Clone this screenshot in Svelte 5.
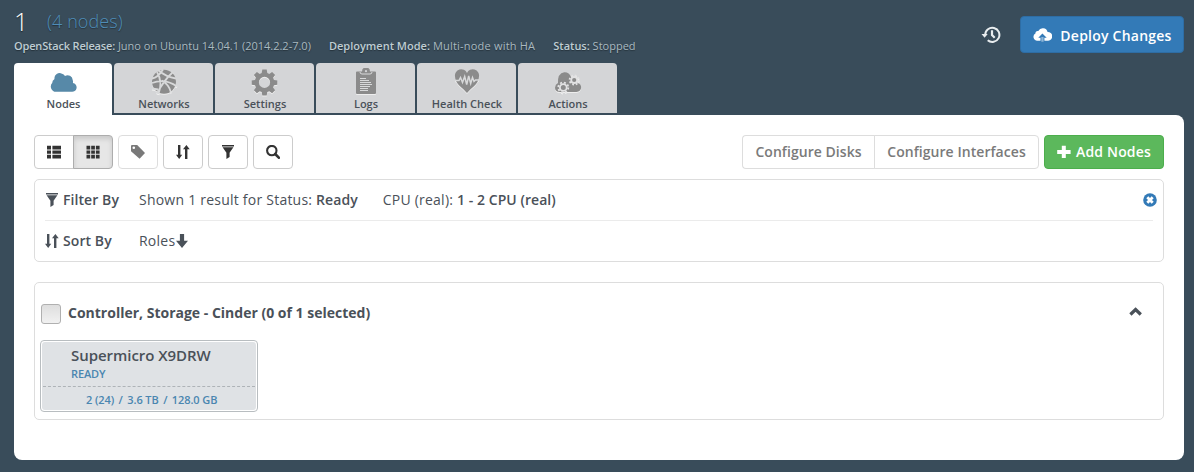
<script>
  const meta = [
    ['OpenStack Release:', 'Juno on Ubuntu 14.04.1 (2014.2.2-7.0)'],
    ['Deployment Mode:', 'Multi-node with HA'],
    ['Status:', 'Stopped']
  ];
  const tabs = ['Nodes', 'Networks', 'Settings', 'Logs', 'Health Check', 'Actions'];
  const specs = ['2 (24)', '/', '3.6 TB', '/', '128.0 GB'];
</script>

{#snippet sortIcon()}
  <svg width="14" height="14" viewBox="0 0 14 14" fill="currentColor"><path d="M2 0h2.400v9.800H6.200L3.200 14 0 9.800h2zM9 14h2.400V4.200h2.300L10.400 0 7 4.200h2z" /></svg>
{/snippet}

{#snippet filterIcon()}
  <svg width="14" height="14" viewBox="0 0 14 14" fill="currentColor"><path d="M1 0h12v1.400H1zM1.600 2.200h10.800L8.600 7.700V12L5.400 14V7.700z" /></svg>
{/snippet}

<div class="page">
  <header>
    <div class="heading">
      <div class="title"><h1>1</h1><span class="count">(4 nodes)</span></div>
      <div class="meta">
        {#each meta as [label, value]}
          <div><b>{label}</b> <span>{value}</span></div>
        {/each}
      </div>
    </div>
    <div class="actions">
      <svg class="history" width="20" height="18" viewBox="0 0 20 18" fill="none" stroke="#e9edef">
        <path d="M4.200 8.800a7.100 7.100 0 1 1 2.500 5.500" stroke-width="2" />
        <path d="M.5 8h6.200L3.600 11.700z" fill="#e9edef" stroke="none" />
        <path d="M11 4.200v4.900l2.700 2.600" stroke-width="2.200" />
      </svg>
      <button class="deploy">
        <svg width="19" height="14" viewBox="0 0 19 14"><path d="M4.200 12.700A3.800 3.800 0 0 1 2.400 5.600 2.600 2.600 0 0 1 5.300 3 5 5 0 0 1 14.600 4a4.300 4.300 0 0 1 .6 8.700h-3.800V9.800h2.300L9.400 5.600 5.300 9.800h2.200v2.900z" fill="#fff" /><path d="M8.300 9h2.300v4.700H8.300z" fill="#fff" opacity=".45" /></svg>
        <span>Deploy Changes</span>
      </button>
    </div>
  </header>

  <nav>
    {#each tabs as tab, i}
      <div class="tab" class:active={i === 0}>
        <svg width="28" height="28" viewBox="0 0 28 28">
          {#if i === 0}
            <path d="M6 23.800a5.200 5.200 0 0 1-3.800-8.700A4.800 4.800 0 0 1 4.500 11 5.100 5.100 0 0 1 12 5.800a6 6 0 0 1 3 2.200 5 5 0 0 1 7.700 4 4.800 4.800 0 0 1 .2 3 4.400 4.400 0 0 1-1.500 8.800z" transform="translate(1)" />
          {:else if i === 1}
            <circle cx="14" cy="13.800" r="12" />
            <path class="cut" d="M2 10.500q6-1 11-9M8 2q8 7 18 8.500M2 15q13-5 25 3.500M7 4q6 10 1.500 22M23 4q-9 8-16 21.500M12 12.500q7 4 9 12M2 20.500l6 1" />
          {:else if i === 2}
            <path fill-rule="evenodd" d="m11.800 1.600h4.400l.6 3.500 2 .9 2.800-2 3 3-2 2.800.9 2.100 3.300.6v4.200l-3.300.6-.9 2.100 2 2.800-3 3-2.800-2-2 .9-.6 3.400h-4.400l-.6-3.400-2-.9-2.800 2-3-3 2-2.800-.9-2.100-3.300-.6v-4.200l3.300-.6.9-2.100-2-2.800 3-3 2.800 2 2-.9zM14 8.800a5.600 5.600 0 1 0 0 11.200 5.600 5.600 0 1 0 0-11.200z" transform="translate(-.5)" />
          {:else if i === 3}
            <path d="M5 3.500h5A4 4 0 0 1 18 3.500h5q1 0 1 1V25q0 1-1 1H5q-1 0-1-1V4.500q0-1 1-1z" />
            <path class="cut thin" d="M8 4q0 2 2 2h8q2 0 2-2M8 10.500h6M8 12.500h9M8 14.500h11M8 16.500h12M8 18.500h10M8 20.500h8M8 22.500h8" />
            <circle cx="14" cy="3.200" r="1.100" fill="#d4d5d7" />
          {:else if i === 4}
            <path d="M14 25C10 20 2 16 2 8.500A6.300 6.300 0 0 1 14 5 6.300 6.300 0 0 1 26 8.500C26 16 18 20 14 25z" />
            <path class="cut beat" d="M2 12.500h4l1.500-3 2 5 2.200-6 2 8 2-8.500 2 7.500 1.800-6 1.500 4 1.500-1.500H26" />
          {:else}
            <path d="M5 24Q.8 23 1 19.400q.3-3.200 3-4.400-.7-9.600 6.300-10.800Q15.300 4 17 9l5 2.500 1.500 3.500q4 1 3.600 5-.6 3.600-4.600 4z" />
            <circle class="hub" cx="9.300" cy="19.500" r="3.400" />
            <circle class="teeth" cx="9.300" cy="19.500" r="5" stroke-dasharray="2 1.927" />
            <circle class="hub" cx="20.200" cy="12" r="3" />
            <circle class="teeth" cx="20.200" cy="12" r="4.600" stroke-dasharray="1.800 1.813" />
          {/if}
        </svg>
        <span>{tab}</span>
      </div>
    {/each}
  </nav>

  <main>
    <div class="toolbar">
      <div class="group">
        <button class="icon"><svg width="16" height="14" viewBox="0 0 16 14" fill="#333"><path d="M1 .8h4v3.600H1zm5.400 0H15v3.600H6.400zM1 5.400h4v3.400H1zm5.400 0H15v3.400H6.400zM1 9.800h4v3.600H1zm5.400 0H15v3.600H6.400z" /></svg></button>
        <button class="icon pressed"><svg width="14" height="14" viewBox="0 0 14 14" fill="#333"><path d="M.5 .8h3.700v3.600H.5zm4.700 0h3.700v3.600H5.200zm4.700 0h3.700v3.600H9.900zM.5 5.400h3.700v3.400H.5zm4.700 0h3.700v3.400H5.200zm4.700 0h3.700v3.400H9.900zM.5 9.800h3.700v3.600H.5zm4.700 0h3.700v3.600H5.200zm4.700 0h3.700v3.600H9.900z" /></svg></button>
      </div>
      <button class="icon dim"><svg width="14" height="14" viewBox="0 0 14 14"><path fill-rule="evenodd" d="M0 1q0-1 1-1h5.200L14 8l-5.400 5.800L0 6.200zM2.800 1.500a1.300 1.300 0 1 0 0 2.600 1.300 1.300 0 1 0 0-2.600z" fill="#333" /></svg></button>
      <button class="icon">{@render sortIcon()}</button>
      <button class="icon">{@render filterIcon()}</button>
      <button class="icon"><svg width="14" height="14" viewBox="0 0 14 14" fill="none" stroke="#333"><circle cx="5.800" cy="5.600" r="4.700" stroke-width="2.100" /><path d="m9.200 9 3.600 3.700" stroke-width="2.600" stroke-linecap="round" /></svg></button>
      <div class="group right">
        <button class="config disks"><span>Configure Disks</span></button>
        <button class="config"><span>Configure Interfaces</span></button>
      </div>
      <button class="add"><svg width="14" height="14" viewBox="0 0 14 14" fill="#fff"><path d="M4.800.8h4v4.100h4.800v4H8.800V13h-4V8.900H.2v-4h4.600z" /></svg><span>Add Nodes</span></button>
    </div>

    <section class="box criteria">
      <div class="row">
        <strong class="kind">{@render filterIcon()}<span>Filter By</span></strong>
        <span class="value">Shown 1 result for Status: <b>Ready</b></span>
        <span class="value">CPU (real): <b>1 - 2 CPU (real)</b></span>
        <svg class="reset" width="14" height="14" viewBox="0 0 14 14"><circle cx="7" cy="7" r="6.800" fill="#337ab7" /><path d="m4.300 4.300 5.400 5.400m0-5.400L4.300 9.700" stroke="#fff" stroke-width="2.800" /></svg>
      </div>
      <div class="row">
        <strong class="kind">{@render sortIcon()}<span>Sort By</span></strong>
        <span class="value">Roles</span>
        <svg class="down" width="12" height="14" viewBox="0 0 12 14" fill="#4a5159"><path d="M3.900 0h4.200v6.800H12L6 14 0 6.800h3.900z" /></svg>
      </div>
    </section>

    <section class="box nodes">
      <div class="grouphead">
        <span class="check"></span>
        <h4>Controller, Storage - Cinder (0 of 1 selected)</h4>
        <svg width="14" height="9" viewBox="0 0 14 9" fill="none" stroke="#4a5159" stroke-width="3.200"><path d="m1.400 7.500 5.200-5 5.200 5" /></svg>
      </div>
      <article>
        <div class="inner">
          <div class="name">Supermicro X9DRW</div>
          <div class="status">READY</div>
          <div class="specs">{#each specs as part}<span>{part}</span>{/each}</div>
        </div>
      </article>
    </section>
  </main>
</div>

<style>
  :global(body) { background: #394c5a; }
  * { box-sizing: border-box; }
  svg { display: block; flex: none; }
  .page { width: 1194px; height: 472px; padding: 0 10px 0 14px; font: 14px/20px "Open Sans", sans-serif; color: #4a5159; white-space: nowrap; overflow: hidden; }
  header { height: 63px; display: flex; justify-content: space-between; }
  .title { display: flex; align-items: flex-start; height: 36px; padding-top: 5px; }
  h1 { margin: 0; width: 33px; font-size: 25px; line-height: 32px; font-weight: 300; color: #fff; text-shadow: 0 1px 1px #18242d; }
  .count { font-size: 18px; line-height: 32px; font-weight: 300; color: #4f8db8; letter-spacing: .1px; text-shadow: 0 1px 1px #25323b; }
  .meta { display: flex; gap: 18px; font-size: 11px; line-height: 20px; color: #a9b9c0; text-shadow: 0 1px 1px #25323b; }
  .meta b { font-weight: 600; color: #bfcdd3; }
  .meta div:first-child b { letter-spacing: -.17px; }
  .meta div:nth-child(2) { letter-spacing: .2px; }
  .meta div:nth-child(2) b { letter-spacing: 0; }
  .actions { display: flex; padding-top: 16px; gap: 19px; }
  .history { margin-top: 10px; }
  button { font: inherit; margin: 0; padding: 0; border: 1px solid #ccc; border-radius: 4px; background: #fff; color: #333; display: flex; align-items: center; justify-content: center; height: 34px; font-weight: 600; }
  .deploy { width: 164px; height: 37px; padding: 1px 0 0 1px; background: #337ab7; border-color: #2e6da4; color: #fff; gap: 8px; font-size: 14px; letter-spacing: .23px; }
  .deploy span { padding-top: 1px; }
  nav { display: flex; gap: 2px; height: 52px; }
  .tab { width: 99px; height: 50px; background: #d4d5d7; border-radius: 4px 4px 0 0; display: flex; flex-direction: column; align-items: center; padding-top: 5px; font-size: 11px; line-height: 16px; font-weight: 600; color: #4a5159; }
  .tab span { padding-left: 1px; }
  .tab.active { width: 98px; height: 52px; background: #fff; }
  .tab svg { fill: #8b8b8b; filter: drop-shadow(0 1px 0 #eee); }
  .tab.active svg { fill: #5789a8; filter: none; }
  .cut { fill: none; stroke: #d8d9da; stroke-width: 1.8; }
  .cut.thin { stroke-width: 1; }
  .cut.beat { stroke-width: 1.5; }
  .hub { fill: #8b8b8b; stroke: #e2e2e3; stroke-width: 1.8; }
  .teeth { fill: none; stroke: #e2e2e3; stroke-width: 1.8; }
  main { height: 345px; background: #fff; border-radius: 0 8px 8px 8px; padding: 20px; }
  .toolbar { display: flex; gap: 5px; height: 34px; }
  .group { display: flex; }
  .group button:first-child { border-radius: 4px 0 0 4px; }
  .group button:last-child { border-radius: 0 4px 4px 0; margin-left: -1px; }
  .icon { width: 40px; }
  .icon.pressed { background: #e6e6e6; border-color: #adadad; box-shadow: inset 0 3px 5px rgba(0,0,0,.125); }
  .dim { opacity: .65; }
  .right { margin-left: auto; }
  .config { width: 165px; color: #7a7a7a; border-color: #ddd; letter-spacing: .05px; }
  .config.disks { width: 133px; border-right-color: #ccc; }
  .add { width: 120px; gap: 5px; background: #5cb85c; border-color: #4cae4c; color: #fff; letter-spacing: .16px; }
  .box { border: 1px solid #ddd; border-radius: 5px; }
  .criteria { height: 83px; margin-top: 10px; padding: 0 10px; }
  .row { display: flex; height: 41px; align-items: center; }
  .row:first-child { border-bottom: 1px solid #ebebeb; }
  .row:last-child { height: 39px; }
  .kind { width: 94px; display: flex; align-items: center; gap: 4px; font-weight: 600; letter-spacing: .08px; }
  .value { letter-spacing: .23px; }
  .row b { font-weight: 600; letter-spacing: .05px; }
  .value + .value { margin-left: 25px; }
  .reset { margin: 0 -4px 0 auto; }
  .down { margin-left: 1px; }
  .nodes { height: 138px; margin-top: 20px; padding: 20px 20px 0 5px; }
  .grouphead { display: flex; align-items: center; height: 20px; }
  .check { width: 20px; height: 20px; margin: 2px 7px 0 1px; border: 1px solid #b0b0b0; border-radius: 3px; background: linear-gradient(#dedede, #f1f1f1); }
  h4 { margin: 0; font-size: 14px; font-weight: 700; }
  .grouphead svg { margin: 0 0 3px auto; }
  article { width: 218px; height: 72px; margin-top: 17px; border: 1px solid #b8bdc0; border-radius: 4px; background: #fff; padding: 1px; }
  .inner { height: 68px; background: #dfe2e5; border-radius: 3px; padding-top: 4px; }
  .name { padding-left: 29px; margin-bottom: 2px; font-size: 15px; line-height: 18px; font-weight: 600; letter-spacing: -.05px; }
  .status { padding-left: 29px; font-size: 11px; line-height: 16px; font-weight: 600; letter-spacing: -.12px; color: #4a86b0; }
  .specs { display: flex; gap: 4.500px; border-top: 1px dashed #aeb3b7; margin: 4px 1px 0; height: 26px; padding-left: 43px; line-height: 26px; font-size: 11px; font-weight: 600; letter-spacing: -.1px; color: #4a86b0; }
</style>
